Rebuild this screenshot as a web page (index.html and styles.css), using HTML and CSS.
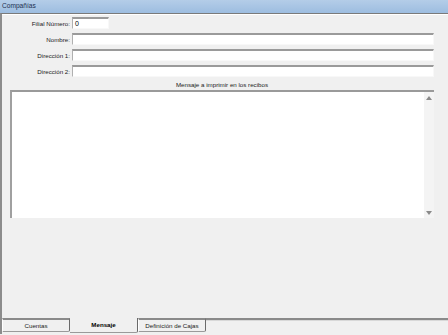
FILE: index.html
```html
<!DOCTYPE html>
<html lang="es">

<head>
    <meta charset="UTF-8">
    <meta name="viewport" content="width=device-width, initial-scale=1.0">
    <title>Compañías</title>
    <link rel="stylesheet" href="styles.css">
</head>

<body>
    <div class="titlebar">Compañías</div>

    <div class="window">
        <div class="form">
            <label class="label">Filial Número:</label>
            <div class="field short">0</div>
            <label class="label">Nombre:</label>
            <div class="field"></div>
            <label class="label">Dirección 1:</label>
            <div class="field"></div>
            <label class="label">Dirección 2:</label>
            <div class="field"></div>
        </div>

        <div class="message">
            <div class="message-title">Mensaje a imprimir en los recibos</div>
            <div class="memo">
                <div class="memo-text"></div>
                <div class="scrollbar">
                    <span class="arrow up"></span>
                    <span class="arrow down"></span>
                </div>
            </div>
        </div>

        <div class="tabs">
            <div class="tab">Cuentas</div>
            <div class="tab active">Mensaje</div>
            <div class="tab">Definición de Cajas</div>
            <div class="tab-rest"></div>
        </div>
    </div>
</body>

</html>
```

FILE: styles.css
```css
body {
    font-family: "Liberation Sans", Arial, sans-serif;
    font-size: 6.2px;
    color: #222;
    background-color: #f0f0f0;
    margin: 0;
    padding: 0;
    width: 448px;
    height: 335px;
    overflow: hidden;
}

.titlebar {
    height: 13px;
    line-height: 12px;
    padding-left: 2px;
    font-size: 6.6px;
    color: #1e3050;
    background: linear-gradient(#b4cde8, #9dbde0);
}

.window {
    display: flex;
    flex-direction: column;
    height: 320px;
    border-top: 1px solid #7a7a7a;
    box-shadow: inset 0 1px 0 #ffffff;
    border-left: 2px solid #8c8c8c;
}

.form {
    display: grid;
    grid-template-columns: 68px 362px;
    column-gap: 2px;
    row-gap: 4px;
    padding-top: 3px;
    align-items: center;
}

.label {
    text-align: right;
}

.field {
    height: 9px;
    line-height: 9px;
    padding-left: 2px;
    font-size: 7px;
    color: #000;
    background-color: #fff;
    border-top: 2px solid #9a9a9a;
    border-left: 1px solid #b0b0b0;
    border-right: 1px solid #f8f8f8;
    border-bottom: 1px solid #f8f8f8;
}

.field.short {
    width: 33px;
}

.message {
    display: flex;
    flex-direction: column;
    padding: 4px 0 0 8px;
    width: 424px;
}

.message-title {
    text-align: center;
    height: 9px;
}

.memo {
    display: flex;
    height: 126px;
    background-color: #fff;
    border-top: 2px solid #9a9a9a;
    border-left: 2px solid #a0a0a0;
}

.memo-text {
    flex: 1;
}

.scrollbar {
    display: flex;
    flex-direction: column;
    justify-content: space-between;
    align-items: center;
    width: 10px;
    padding: 4px 0 3px;
    background-color: #f4f4f4;
}

.arrow {
    width: 0;
    height: 0;
    border-left: 3px solid transparent;
    border-right: 3px solid transparent;
}

.arrow.up {
    border-bottom: 4px solid #8a8a8a;
}

.arrow.down {
    border-top: 4px solid #8a8a8a;
}

.tabs {
    display: flex;
    margin-top: auto;
    height: 15px;
    margin-bottom: 1px;
}

.tab {
    width: 66px;
    height: 11px;
    line-height: 11px;
    text-align: center;
    border-top: 2px solid #8a8a8a;
    border-right: 1px solid #6a6a6a;
    border-bottom: 1px solid #9a9a9a;
    border-left: 1px solid #ffffff;
    border-bottom-right-radius: 2px;
}

.tab.active {
    width: 67px;
    height: 14px;
    line-height: 13px;
    font-weight: bold;
    color: #000;
    border-top: none;
    border-left: none;
}

.tab-rest {
    flex: 1;
    height: 0;
    border-top: 2px solid #8a8a8a;
    box-shadow: 0 1px 0 #d8d8d8;
}
```
